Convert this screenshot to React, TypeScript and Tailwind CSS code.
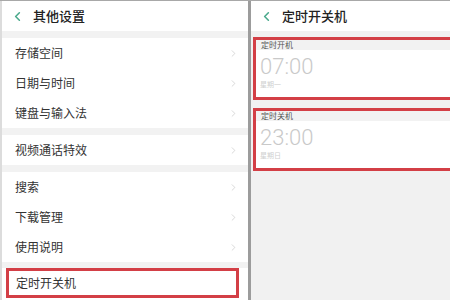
import { ChevronLeft, ChevronRight } from "lucide-react";

const groups: string[][] = [
  ["存储空间", "日期与时间", "键盘与输入法"],
  ["视频通话特效"],
  ["搜索", "下载管理", "使用说明"],
];

const timers = [
  { label: "定时开机", time: "07:00", day: "星期一" },
  { label: "定时关机", time: "23:00", day: "星期日" },
];

const Row = ({ title }: { title: string }) => (
  <div className="h-[30px] flex items-center justify-between pl-[13px] pr-[9px] bg-white">
    <span className="text-[12px] text-[#333]">{title}</span>
    <ChevronRight size={11} strokeWidth={1.25} className="text-[#bdbdbd]" />
  </div>
);

const Header = ({ title }: { title: string }) => (
  <div className="h-[30px] flex items-center bg-white">
    <ChevronLeft size={15} strokeWidth={2.5} className="ml-[8px] text-[#4aa98c]" />
    <span className="ml-[8px] text-[13px] font-medium text-[#222]">{title}</span>
  </div>
);

export default function App() {
  return (
    <div
      className="w-[450px] h-[300px] flex overflow-hidden border-t border-[#a8a8a8] bg-[#f1f1f1]"
      style={{ fontFamily: '"Noto Sans CJK SC", "Noto Sans", sans-serif' }}
    >
      {/* 其他设置 */}
      <div className="w-[248px] shrink-0 border-l-2 border-[#dcdcdc] flex flex-col bg-[#f2f2f2]">
        <Header title="其他设置" />
        {groups.map((g, i) => (
          <div key={i} className="mt-[7px]">
            {g.map((t) => (
              <Row key={t} title={t} />
            ))}
          </div>
        ))}
        <div className="mt-[6px] h-[32px] bg-white pl-[4px] pr-[9px]">
          <div className="h-[30px] border-[3px] border-[#d33f46] flex items-center pl-[7px]">
            <span className="text-[12px] text-[#333]">定时开关机</span>
          </div>
        </div>
      </div>

      <div className="w-[3px] shrink-0 bg-[#9c9c9c]" />

      {/* 定时开关机 */}
      <div className="w-[199px] shrink-0 flex flex-col bg-[#f1f1f1] overflow-hidden">
        <Header title="定时开关机" />
        <div className="mt-[6px] flex flex-col items-start gap-[8px] pl-[2px]">
          {timers.map((t) => (
            <div key={t.label} className="w-[260px] shrink-0 h-[63px] border-[3px] border-[#d33f46] bg-white flex flex-col">
              <div className="h-[10px] bg-[#f2f2f2] flex items-center pl-[5px]">
                <span className="text-[8px] leading-none text-[#555]">{t.label}</span>
              </div>
              <div className="pl-[4px] pt-[6px] flex flex-col">
                <span
                  className="text-[22px] leading-none text-[#c9c9c9]"
                  style={{ fontFamily: '"Roboto", "Noto Sans", sans-serif', fontWeight: 300 }}
                >
                  {t.time}
                </span>
                <span className="mt-[3px] text-[7px] leading-none text-[#cfcfcf]">{t.day}</span>
              </div>
            </div>
          ))}
        </div>
      </div>
    </div>
  );
}
